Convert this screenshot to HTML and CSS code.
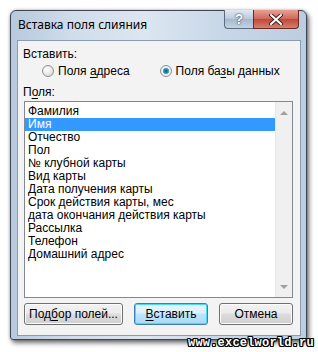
FILE: index.html
```html
<!DOCTYPE html>
<html lang="ru">
<head>
  <meta charset="UTF-8" />
  <title>Вставка поля слияния</title>
  <link rel="stylesheet" href="styles.css">
</head>
<body>
  <div class="window">
    <div class="titlebar">
      <span class="title">Вставка поля слияния</span>
      <div class="caption-btns">
        <span class="cap-btn help">?</span>
        <span class="cap-btn close">
          <svg width="14" height="11" viewBox="0 0 14 11">
            <path d="M2 1 L12 10 M12 1 L2 10" stroke="#4a2020" stroke-width="4" stroke-linecap="round"/>
            <path d="M2 1 L12 10 M12 1 L2 10" stroke="#fff" stroke-width="2" stroke-linecap="round"/>
          </svg>
        </span>
      </div>
    </div>
    <div class="client">
      <div class="label">Вставить:</div>
      <div class="radio-row">
        <label class="radio"><span class="dot"></span><span>Поля <u>а</u>дреса</span></label>
        <label class="radio checked"><span class="dot"></span><span>Поля ба<u>з</u>ы данных</span></label>
      </div>
      <div class="label">П<u>о</u>ля:</div>
      <div class="listbox">
        <ul class="items">
          <li>Фамилия</li>
          <li class="selected">Имя</li>
          <li>Отчество</li>
          <li>Пол</li>
          <li>№ клубной карты</li>
          <li>Вид карты</li>
          <li>Дата получения карты</li>
          <li>Срок действия карты, мес</li>
          <li>дата окончания действия карты</li>
          <li>Рассылка</li>
          <li>Телефон</li>
          <li>Домашний адрес</li>
        </ul>
        <div class="scrollbar">
          <span class="arrow up"></span>
          <span class="arrow down"></span>
        </div>
      </div>
      <div class="buttons">
        <button class="btn wide">Под<u>б</u>ор полей...</button>
        <button class="btn default"><u>В</u>ставить</button>
        <button class="btn">Отмена</button>
      </div>
    </div>
  </div>
  <div class="watermark">www.excelworld.ru</div>
</body>
</html>
```

FILE: styles.css
```css
* { box-sizing: border-box; }
body {
  margin: 0;
  width: 318px;
  height: 352px;
  overflow: hidden;
  background: #fff;
  font-family: "Liberation Sans", Arial, sans-serif;
  font-size: 12px;
  color: #000;
  position: relative;
}
.window {
  margin: 10px 0 0 10px;
  width: 297px;
  height: 330px;
  border: 1px solid #3c4654;
  border-radius: 6px 6px 3px 3px;
  background: linear-gradient(90deg, #b7c9dc 0%, #cfdcea 20%, #dce6f1 45%, #c9d8e8 70%, #bccde0 100%);
  box-shadow: 2px 3px 5px rgba(0,0,0,0.55), 0 0 3px rgba(0,0,0,0.3);
  padding: 0 5px 3px 6px;
  display: flex;
  flex-direction: column;
}
.titlebar {
  height: 29px;
  display: flex;
  align-items: flex-start;
  justify-content: space-between;
}
.title {
  margin: 7px 0 0 1px;
  font-family: "Noto Sans", sans-serif;
  font-size: 12px;
  line-height: 14px;
}
.caption-btns {
  display: flex;
  margin-top: -1px;
  margin-right: 2px;
}
.cap-btn {
  height: 19px;
  display: flex;
  align-items: center;
  justify-content: center;
  border: 1px solid #5b6b80;
  border-top: none;
}
.help {
  width: 29px;
  border-radius: 0 0 0 4px;
  border-right: none;
  background: linear-gradient(#dfe8f2, #b9c9da 50%, #a5b8cd 51%, #c3d3e3);
  color: #fff;
  font-weight: bold;
  font-size: 14px;
  text-shadow: 0 0 2px #34455c, 0 0 1px #34455c;
}
.close {
  width: 46px;
  border-radius: 0 0 4px 0;
  border-color: #6b2a24;
  background: linear-gradient(#e8a092, #d0675a 50%, #c04737 51%, #d5806f);
}
.client {
  flex: 1;
  border: 1px solid #8b9cb0;
  background: #f3f3f3;
  padding: 6px 7px 0 5px;
  display: flex;
  flex-direction: column;
}
.label {
  line-height: 14px;
}
.radio-row {
  display: flex;
  margin: 3px 0 7px 19px;
  line-height: 14px;
}
.radio {
  display: flex;
  align-items: center;
  gap: 4px;
  white-space: nowrap;
}
.radio + .radio { margin-left: 30px; }
.dot {
  width: 12px;
  height: 12px;
  border-radius: 50%;
  border: 1px solid #8f8f8f;
  background: radial-gradient(circle at 40% 35%, #fff, #dcdcdc 80%);
}
.checked .dot {
  background: radial-gradient(circle, #0f5a72 0, #2b8bb0 2px, #5fb4d6 3px, #e8f2f7 3.5px, #f4f4f4 6px);
}
u { text-decoration-thickness: 1px; text-underline-offset: 2px; }
.listbox {
  margin: 2px 0 0 1px;
  height: 197px;
  width: 269px;
  border: 1px solid #828790;
  background: #fff;
  display: flex;
}
.items {
  list-style: none;
  margin: 0;
  padding: 3px 0 0 0;
  flex: 1;
}
.items li {
  height: 13px;
  line-height: 13px;
  padding-left: 3px;
  white-space: nowrap;
}
.items li.selected {
  background: #3399ff;
  color: #fff;
}
.scrollbar {
  width: 17px;
  background: #f0f0f0;
  border-left: 1px solid #e6e6e6;
  display: flex;
  flex-direction: column;
  justify-content: space-between;
  align-items: center;
  padding: 9px 0 8px;
}
.arrow {
  width: 0;
  height: 0;
  border-left: 4px solid transparent;
  border-right: 4px solid transparent;
}
.arrow.up { border-bottom: 4px solid #a0a0a0; }
.arrow.down { border-top: 4px solid #a0a0a0; }
.buttons {
  display: flex;
  gap: 11px;
  margin: 5px 0 0 1px;
}
.btn {
  width: 74px;
  height: 22px;
  padding: 0;
  font-family: inherit;
  font-size: 12px;
  color: #000;
  border: 1px solid #707070;
  border-radius: 3px;
  background: linear-gradient(#f2f2f2, #ebebeb 45%, #dddddd 50%, #cfcfcf);
  box-shadow: inset 0 0 0 1px #fcfcfc;
}
.btn.wide { width: 99px; }
.btn.default {
  border-color: #3c7fb1;
  background: linear-gradient(#eaf6fd, #d9f0fc 45%, #bee6fd 50%, #a7d9f5);
  box-shadow: inset 0 0 0 1px #48d8fb;
}
.watermark {
  position: absolute;
  left: 188px;
  top: 336px;
  font-family: "Liberation Mono", monospace;
  font-weight: bold;
  font-size: 12px;
  letter-spacing: 0.2px;
  color: #fff;
  text-shadow: 1px 0 0 #000, -1px 0 0 #000, 0 1px 0 #000, 0 -1px 0 #000, 1px 1px 0 #000, -1px -1px 0 #000, 1px -1px 0 #000, -1px 1px 0 #000;
}
```
